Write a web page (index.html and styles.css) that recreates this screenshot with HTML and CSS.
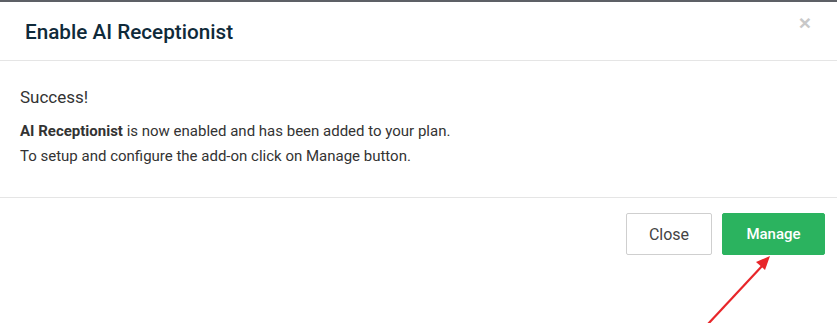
FILE: index.html
```html
<!DOCTYPE html>
<html lang="en">
<head>
    <meta charset="UTF-8">
    <meta name="viewport" content="width=device-width, initial-scale=1.0">
    <title>Enable AI Receptionist</title>
    <link rel="stylesheet" href="styles.css">
</head>
<body>
    <div class="backdrop-strip"></div>
    <div class="modal">
        <div class="modal-header">
            <h4 class="modal-title">Enable AI Receptionist</h4>
            <button type="button" class="close-x">&times;</button>
        </div>
        <div class="modal-body">
            <h5 class="success">Success!</h5>
            <p><b>AI Receptionist</b> is now enabled and has been added to your plan.<br>
            To setup and configure the add-on click on Manage button.</p>
        </div>
        <div class="modal-footer">
            <button type="button" class="btn btn-default">Close</button>
            <button type="button" class="btn btn-success">Manage</button>
            <svg class="arrow" width="80" height="80" viewBox="0 0 80 80">
                <line x1="8" y1="76" x2="63" y2="17" stroke="#e8262a" stroke-width="2.2"/>
                <polygon points="70,8 56,14 65,22" fill="#e8262a"/>
            </svg>
        </div>
    </div>
</body>
</html>
```

FILE: styles.css
```css
body {
    margin: 0;
    font-family: Roboto, "Liberation Sans", sans-serif;
    background-color: #fff;
    color: #333;
}

.backdrop-strip {
    height: 2px;
    background-color: #5d6066;
}

.modal {
    background-color: #fff;
}

.modal-header {
    display: flex;
    align-items: center;
    justify-content: space-between;
    height: 58px;
    padding: 0 25px;
    border-bottom: 1px solid #e5e5e5;
}

.modal-title {
    margin: 0;
    font-size: 20.7px;
    font-weight: 500;
    color: #0f2a3a;
    padding-top: 1px;
}

.close-x {
    background: none;
    border: none;
    padding: 0;
    margin-right: 1px;
    margin-top: -16px;
    font-family: "Liberation Sans", sans-serif;
    font-size: 21px;
    font-weight: bold;
    color: #c8c8c8;
    cursor: pointer;
}

.modal-body {
    height: 137px;
    padding: 0 20px;
    border-bottom: 1px solid #e5e5e5;
    box-sizing: border-box;
}

.success {
    margin: 0;
    padding-top: 26px;
    font-size: 17px;
    font-weight: 400;
    color: #333;
}

.modal-body p {
    margin: 12px 0 0;
    font-size: 15px;
    line-height: 25px;
    color: #333;
}

.modal-footer {
    position: relative;
    display: flex;
    justify-content: flex-end;
    gap: 10px;
    padding: 15px 12px 0 0;
    height: 125px;
    box-sizing: border-box;
}

.btn {
    height: 42px;
    padding: 0 20px;
    font-family: Roboto, "Liberation Sans", sans-serif;
    font-size: 16px;
    border-radius: 2px;
    cursor: pointer;
}

.btn-default {
    width: 86px;
    background-color: #fff;
    border: 1px solid #cfcfcf;
    color: #444;
}

.btn-success {
    width: 103px;
    background-color: #2bb35f;
    border: 1px solid #2bb35f;
    color: #fff;
    font-size: 15px;
    font-weight: 500;
}

.arrow {
    position: absolute;
    left: 700px;
    top: 50px;
}
```
